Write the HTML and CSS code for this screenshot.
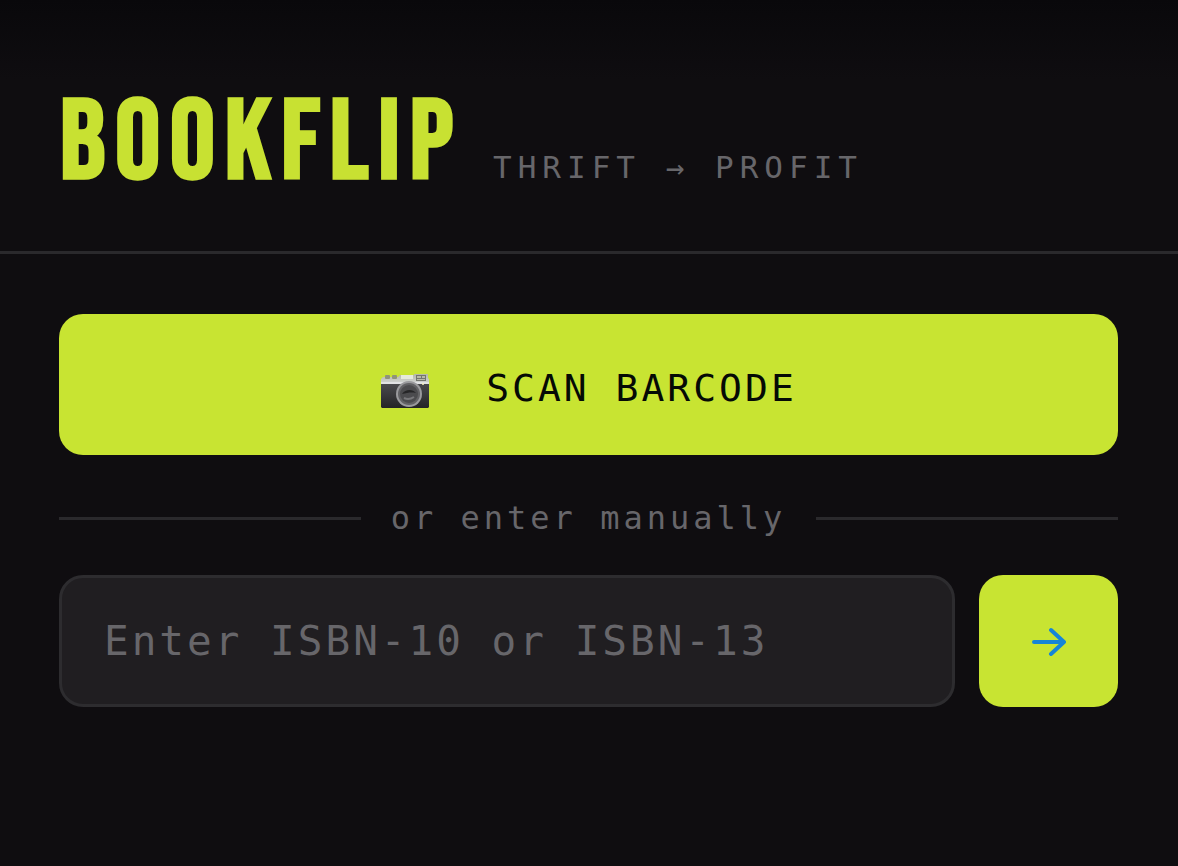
FILE: index.html
```html
<!DOCTYPE html>
<html lang="en">
<head>
    <meta charset="UTF-8">
    <meta name="viewport" content="width=device-width, initial-scale=1.0">
    <title>BookFlip</title>
    <link rel="stylesheet" href="styles.css">
</head>
<body>
    <header class="header">
        <h1 class="logo">BOOKFLIP</h1>
        <p class="tagline">THRIFT → PROFIT</p>
    </header>
    <main class="content">
        <button type="button" class="btn btn-scan">
            <svg class="camera" viewBox="0 0 50 36" aria-hidden="true">
                <defs>
                    <linearGradient id="metal" x1="0" y1="0" x2="0" y2="1">
                        <stop offset="0" stop-color="#b4b7a9"/>
                        <stop offset="1" stop-color="#d7d9dc"/>
                    </linearGradient>
                    <linearGradient id="leather" x1="0" y1="0" x2="0" y2="1">
                        <stop offset="0" stop-color="#4a4a4e"/>
                        <stop offset="1" stop-color="#242426"/>
                    </linearGradient>
                </defs>
                <path d="M1 6l2-2h15l2-2h14v-1h14v4l1 1v6H1z" fill="url(#metal)"/>
                <rect x="5" y="2" width="5" height="4" rx="1" fill="#8f947a"/>
                <rect x="12" y="2" width="5" height="4" rx="1" fill="#8f947a"/>
                <rect x="21" y="2" width="12" height="4" fill="#e5eadc"/>
                <rect x="36" y="2" width="10" height="6" fill="#73756f"/>
                <path d="M37 3h4v2h-4zM42 3h3v2h-3zM37 6h8v1h-8z" fill="#b8baa8"/>
                <path d="M1 11h48v23l-1 1H2l-1-1z" fill="url(#leather)"/>
                <path d="M1 10h48" stroke="#e1e2e4" stroke-width="2"/>
                <circle cx="43" cy="11" r="1" fill="#f8f4c0"/>
                <circle cx="29" cy="21" r="13" fill="#9a9a9d"/>
                <circle cx="29" cy="21" r="11" fill="#626265"/>
                <circle cx="29" cy="21" r="9" fill="#4b4b4e"/>
                <path d="M22 21c3-5 11-5 14-1-5-1-9 0-14 1z" fill="#252527"/>
                <path d="M24 25c4 2 7 1 10-1" fill="none" stroke="#77777a" stroke-width="2"/>
            </svg>
            <span>SCAN BARCODE</span>
        </button>
        <div class="divider">or enter manually</div>
        <form class="isbn-form">
            <input type="text" class="form-control" aria-label="ISBN" placeholder="Enter ISBN-10 or ISBN-13">
            <button type="button" class="btn btn-go" aria-label="Look up">
                <svg class="arrow" viewBox="0 0 36 30" aria-hidden="true">
                    <path d="M3 16h30M20 4l13 12-13 12"/>
                </svg>
            </button>
        </form>
    </main>
</body>
</html>
```
FILE: styles.css
```css
* {box-sizing: border-box;}
body {
    margin: 0;
    min-height: 100vh;
    background: linear-gradient(#09080b, #0f0d10 80px);
    color: #67666a;
    font-family: Menlo, "DejaVu Sans Mono", monospace;
    font-size: 32px;
}
.header {
    display: flex;
    align-items: baseline;
    gap: 30px;
    padding: 81px 60px 43px;
    border-bottom: 3px solid #2a292c;
}
.logo {
    margin: 0;
    color: #c8e132;
    font-family: "Bebas Neue", "Liberation Sans Narrow", sans-serif;
    font-size: 112px;
    font-weight: bold;
    line-height: 127px;
    letter-spacing: 10px;
}
.tagline {
    margin: 0;
    font-size: 31px;
    letter-spacing: 6px;
}
.content {
    padding: 60px 60px 60px 59px;
}
.btn {
    display: flex;
    align-items: center;
    justify-content: center;
    border: none;
    border-radius: 24px;
    background-color: #c8e432;
    color: #050a05;
    font-family: inherit;
    cursor: pointer;
}
.btn-scan {
    width: 100%;
    gap: 56px;
    padding: 52px 48px 44px;
    font-size: 38px;
    line-height: 45px;
    letter-spacing: 3px;
}
.camera {
    width: 50px;
    height: 36px;
    margin-top: 4px;
}
.divider {
    display: flex;
    align-items: center;
    gap: 30px;
    padding: 43px 0 37px;
    line-height: 40px;
    letter-spacing: 4px;
}
.divider::before,
.divider::after {
    content: "";
    flex: 1;
    height: 3px;
    background-color: #2a292c;
}
.isbn-form {
    display: flex;
    gap: 24px;
}
.form-control {
    flex: 1;
    min-width: 0;
    padding: 40px 42px;
    border: 3px solid #2d2c2f;
    border-radius: 24px;
    outline: none;
    background-color: #201e21;
    color: #eee;
    font-family: inherit;
    font-size: 41px;
    line-height: 46px;
    letter-spacing: 3px;
}
.form-control::placeholder {
    color: #67666a;
    opacity: 1;
}
.btn-go {
    width: 139px;
    padding: 0;
}
.arrow {
    width: 36px;
    height: 30px;
    fill: none;
    stroke: #1685d8;
    stroke-width: 4;
    stroke-linecap: round;
    stroke-linejoin: round;
}
```
